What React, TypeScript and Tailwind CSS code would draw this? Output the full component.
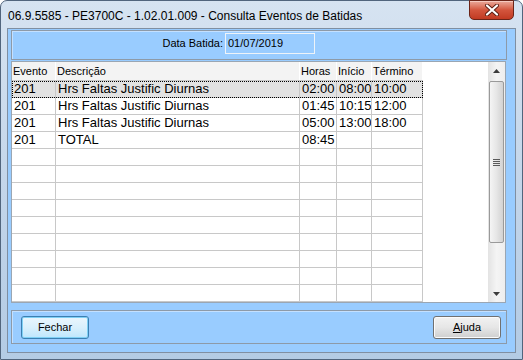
import React from 'react';

const rows = [
  { ev: '201', desc: 'Hrs Faltas Justific Diurnas', horas: '02:00', ini: '08:00', fim: '10:00' },
  { ev: '201', desc: 'Hrs Faltas Justific Diurnas', horas: '01:45', ini: '10:15', fim: '12:00' },
  { ev: '201', desc: 'Hrs Faltas Justific Diurnas', horas: '05:00', ini: '13:00', fim: '18:00' },
  { ev: '201', desc: 'TOTAL', horas: '08:45', ini: '', fim: '' },
];

const EMPTY = 9;

function CloseButton() {
  return (
    <div className="absolute right-[8px] top-[-1px] w-[45px] h-[20px] rounded-b-[5px] border border-[#6b2418] bg-gradient-to-b from-[#e9a99b] via-[#d3553d] to-[#c13a22] flex items-center justify-center shadow-[inset_0_1px_0_#f5c9bf]">
      <svg width="14" height="12" viewBox="0 0 14 12">
        <path d="M2 1.5 L12 10.5 M12 1.5 L2 10.5" stroke="#5a1d12" strokeWidth="4" strokeLinecap="round" />
        <path d="M2 1.5 L12 10.5 M12 1.5 L2 10.5" stroke="#ffffff" strokeWidth="2.2" strokeLinecap="round" />
      </svg>
    </div>
  );
}

function Row({ r, selected }: { r?: typeof rows[number]; selected?: boolean }) {
  const cell = 'h-full border-r border-[#c8c8c8] pl-[2px] leading-[16px] whitespace-nowrap overflow-hidden';
  return (
    <div
      className={`flex h-[17px] w-[411px] border-b border-[#c8c8c8] text-[13px] text-black ${
        selected ? 'bg-[#e2e2e2] outline outline-1 outline-dotted outline-black -outline-offset-1' : ''
      }`}
    >
      <div className={`${cell} w-[44px]`}>{r?.ev}</div>
      <div className={`${cell} w-[244px]`}>{r?.desc}</div>
      <div className={`${cell} w-[37px] pl-[1px]`}>{r?.horas}</div>
      <div className={`${cell} w-[35px] pl-[1px]`}>{r?.ini}</div>
      <div className={`${cell} w-[51px] pl-[1px]`}>{r?.fim}</div>
    </div>
  );
}

function ScrollBar() {
  return (
    <div className="w-[17px] h-full flex flex-col bg-gradient-to-r from-[#e3e3e3] via-[#f4f4f4] to-[#eeeeee]">
      <div className="h-[17px] flex items-center justify-center">
        <svg width="7" height="4" viewBox="0 0 7 4">
          <path d="M0 4 L3.5 0 L7 4 Z" fill="#3c3c3c" />
        </svg>
      </div>
      <div className="h-[2px]" />
      <div className="h-[162px] mx-[1px] rounded-[2px] border border-[#9a9a9a] bg-gradient-to-r from-[#f5f5f5] via-[#e6e6e6] to-[#d2d2d2] flex items-center justify-center">
        <div className="flex flex-col gap-[1px]">
          <div className="w-[7px] h-[1px] bg-[#5a5a5a]" />
          <div className="w-[7px] h-[1px] bg-[#5a5a5a]" />
          <div className="w-[7px] h-[1px] bg-[#5a5a5a]" />
          <div className="w-[7px] h-[1px] bg-[#5a5a5a]" />
        </div>
      </div>
      <div className="flex-1" />
      <div className="h-[17px] flex items-center justify-center">
        <svg width="7" height="4" viewBox="0 0 7 4">
          <path d="M0 0 L7 0 L3.5 4 Z" fill="#3c3c3c" />
        </svg>
      </div>
    </div>
  );
}

export default function App() {
  const head = 'h-full border-r border-white pl-[1px] leading-[19px]';
  return (
    <div className="w-[523px] h-[360px] overflow-hidden bg-white font-['Liberation_Sans',Arial,sans-serif]">
      <div className="relative h-full flex flex-col rounded-t-[7px] border border-[#51657d] bg-gradient-to-b from-[#d6e3f1] via-[#c4d6ea] to-[#b3cbe4]">
        {/* title bar */}
        <div className="h-[27px] pl-[7px] pt-[2px] flex items-center text-[12px] text-black">
          06.9.5585 - PE3700C - 1.02.01.009 - Consulta Eventos de Batidas
        </div>
        <CloseButton />

        {/* client area */}
        <div className="flex-1 mx-[6px] mb-[6px] border border-[#7f8fa2] bg-[#99ccff] flex flex-col pl-[3px] pt-[1px]">
          <div className="w-[496px] h-[30px] border border-[#8d9aa8] shadow-[inset_1px_1px_0_#c4e0ff] flex items-start pt-[2px] pl-[150px]">
            <span className="text-[11px] leading-[20px] text-black w-[61px] text-right">Data Batida:</span>
            <div className="ml-[2px] w-[90px] h-[21px] border border-[#eef3f8] bg-[#99ccff] text-[11px] leading-[19px] pl-[2px] text-black">
              01/07/2019
            </div>
          </div>

          <div className="mt-[1px] w-[495px] h-[242px] border border-[#9aa6b3] bg-white flex">
            <div className="w-[476px] h-full flex flex-col overflow-hidden">
              <div className="flex h-[19px] w-[411px] border-b border-[#c8c8c8] bg-[#f3f3f3] text-[11px] text-black">
                <div className={`${head} w-[44px]`}>Evento</div>
                <div className={`${head} w-[244px]`}>Descrição</div>
                <div className={`${head} w-[37px]`}>Horas</div>
                <div className={`${head} w-[35px]`}>Início</div>
                <div className={`${head} w-[51px] border-[#d6d6d6]`}>Término</div>
              </div>
              {rows.map((r, i) => (
                <Row key={i} r={r} selected={i === 0} />
              ))}
              {Array.from({ length: EMPTY }).map((_, i) => (
                <Row key={'e' + i} />
              ))}
            </div>
            <ScrollBar />
          </div>

          <div className="mt-[7px] w-[496px] h-[34px] border border-[#8d9aa8] shadow-[inset_1px_1px_0_#c4e0ff] flex items-start justify-between pt-[5px] pl-[9px] pr-[5px]">
            <button className="w-[68px] h-[23px] rounded-[3px] border border-[#3c7fb1] bg-gradient-to-b from-[#eaf6fd] via-[#d9f0fc] to-[#bee6fd] shadow-[inset_0_0_0_1px_#7fd0f5] text-[11px] text-black">
              Fechar
            </button>
            <button className="w-[68px] h-[23px] rounded-[3px] border border-[#707070] bg-gradient-to-b from-[#f2f2f2] via-[#e6e6e6] to-[#cfcfcf] shadow-[inset_0_0_0_1px_#fbfbfb] text-[11px] text-black">
              <span className="underline underline-offset-[1px]">A</span>juda
            </button>
          </div>
        </div>
      </div>
    </div>
  );
}
